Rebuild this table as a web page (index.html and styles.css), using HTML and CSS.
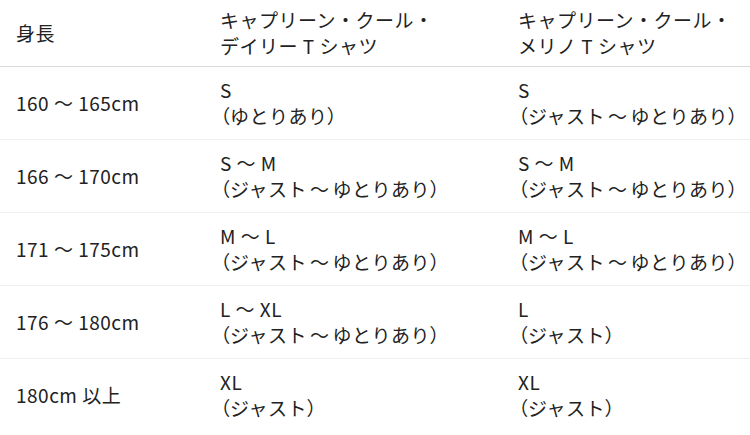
FILE: index.html
```html
<!DOCTYPE html>
<html lang="ja">
<head>
<meta charset="utf-8">
<link rel="stylesheet" href="styles.css">
</head>
<body>
<table class="size-table">
  <thead>
    <tr>
      <th class="c1">身長</th>
      <th class="c2">キャプリーン・クール・<br>デイリー T シャツ</th>
      <th class="c3">キャプリーン・クール・<br>メリノ T シャツ</th>
    </tr>
  </thead>
  <tbody>
    <tr>
      <td>160 ～ 165cm</td>
      <td>S<br><span class="p">（</span>ゆとりあり<span class="p">）</span></td>
      <td>S<br><span class="p">（</span>ジャスト<span class="w">～</span>ゆとりあり<span class="p">）</span></td>
    </tr>
    <tr>
      <td>166 ～ 170cm</td>
      <td>S ～ M<br><span class="p">（</span>ジャスト<span class="w">～</span>ゆとりあり<span class="p">）</span></td>
      <td>S ～ M<br><span class="p">（</span>ジャスト<span class="w">～</span>ゆとりあり<span class="p">）</span></td>
    </tr>
    <tr>
      <td>171 ～ 175cm</td>
      <td>M ～ L<br><span class="p">（</span>ジャスト<span class="w">～</span>ゆとりあり<span class="p">）</span></td>
      <td>M ～ L<br><span class="p">（</span>ジャスト<span class="w">～</span>ゆとりあり<span class="p">）</span></td>
    </tr>
    <tr>
      <td>176 ～ 180cm</td>
      <td>L ～ XL<br><span class="p">（</span>ジャスト<span class="w">～</span>ゆとりあり<span class="p">）</span></td>
      <td>L<br><span class="p">（</span>ジャスト<span class="p">）</span></td>
    </tr>
    <tr>
      <td>180cm 以上</td>
      <td>XL<br><span class="p">（</span>ジャスト<span class="p">）</span></td>
      <td>XL<br><span class="p">（</span>ジャスト<span class="p">）</span></td>
    </tr>
  </tbody>
</table>
</body>
</html>
```

FILE: styles.css
```css
html, body {
  margin: 0;
  padding: 0;
  background: #fff;
}
body {
  font-family: "Noto Sans CJK JP", "Noto Sans", sans-serif;
  font-size: 19px;
  line-height: 26px;
  letter-spacing: 0.5px;
  color: #222;
}
.size-table {
  width: 750px;
  border-collapse: collapse;
  table-layout: fixed;
}
.size-table th,
.size-table td {
  text-align: left;
  vertical-align: middle;
  font-weight: 400;
  padding: 10px 0 10px 16px;
}
.size-table th {
  padding-top: 7px;
  padding-bottom: 7px;
  border-bottom: 1px solid #d9d9d9;
}
.size-table th.c1 { width: 188px; }
.size-table th.c2 { width: 282px; }
.size-table tbody tr + tr td {
  border-top: 1px solid #efefef;
}
.p {
  font-feature-settings: "palt";
}
.w {
  padding: 0 3px;
}
```
